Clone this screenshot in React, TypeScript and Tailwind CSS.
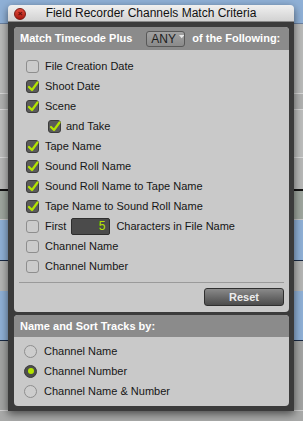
import React from "react";

const FONT = { fontFamily: '"Liberation Sans", Arial, sans-serif' };

const ROWS: { label: string; on: boolean; indent?: boolean; field?: boolean }[] = [
  { label: "File Creation Date", on: false },
  { label: "Shoot Date", on: true },
  { label: "Scene", on: true },
  { label: "and Take", on: true, indent: true },
  { label: "Tape Name", on: true },
  { label: "Sound Roll Name", on: true },
  { label: "Sound Roll Name to Tape Name", on: true },
  { label: "Tape Name to Sound Roll Name", on: true },
  { label: "First", on: false, field: true },
  { label: "Channel Name", on: false },
  { label: "Channel Number", on: false },
];

const SORT = [
  { label: "Channel Name", on: false },
  { label: "Channel Number", on: true },
  { label: "Channel Name & Number", on: false },
];

function Check({ on }: { on: boolean }) {
  if (!on) {
    return <div className="w-[13px] h-[13px] shrink-0 rounded-[3px] border border-[#8e8e8e] bg-[#cbcbcb]" />;
  }
  return (
    <div className="relative w-[13px] h-[13px] shrink-0 rounded-[3px] border border-[#3c3c3c] bg-[#5a5a5a]">
      <svg className="absolute left-[0px] top-[-1px]" width="12" height="13" viewBox="0 0 12 13">
        <path d="M2 7 L5 10 L10.5 2.5" fill="none" stroke="#b4e400" strokeWidth="2.2" strokeLinecap="round" strokeLinejoin="round" />
      </svg>
    </div>
  );
}

function Radio({ on }: { on: boolean }) {
  if (!on) {
    return <div className="w-[13px] h-[13px] shrink-0 rounded-full border border-[#8e8e8e] bg-[#cdcdcd]" />;
  }
  return (
    <div className="w-[13px] h-[13px] shrink-0 rounded-full bg-[#4e4e4e] border border-[#3a3a3a] flex items-center justify-center">
      <div className="w-[6px] h-[6px] rounded-full bg-[#b4e400]" />
    </div>
  );
}

export default function App() {
  return (
    <div className="relative w-[303px] h-[421px] overflow-hidden bg-[#a9aaa9]" style={FONT}>
      {/* Pro Tools edit window peeking out behind the dialog */}
      <div className="flex flex-col">
        <div className="h-[24px] bg-[#8fb0d6] border-b border-[#6a80a0]" />
        <div className="h-[70px] bg-[#b9bab9] border-b border-[#d8d8d8]" />
        <div className="h-[16px] bg-[#b0b1b0] border-b border-[#d8d8d8]" />
        <div className="h-[48px] bg-[#bcbdbc] border-b border-[#d8d8d8]" />
        <div className="h-[33px] bg-[#b7b8b7] border-b-2 border-[#111]" />
        <div className="h-[29px] bg-[#9ea69e] border-b border-[#c8c8c8]" />
        <div className="h-[41px] bg-[#8fb0d6] border-b border-[#1a2a44]" />
        <div className="h-[30px] bg-[#b4b5b4]" />
        <div className="h-[50px] bg-[#8fb0d6] border-b border-[#1a2a44]" />
        <div className="h-[70px] bg-[#a3a4a3] border-b border-[#d0d0d0]" />
      </div>

      {/* Dialog window */}
      <div className="absolute left-[8px] top-[5px] w-[286px] flex flex-col rounded-t-[4px] shadow-[0_3px_8px_rgba(0,0,0,0.55)]">
        <div className="relative h-[17px] flex items-center justify-center rounded-t-[4px] bg-gradient-to-b from-[#f0f0f0] to-[#d2d2d2] border-b border-[#8a8a8a]">
          <div className="absolute left-[6px] top-[3px] w-[12px] h-[12px] rounded-full bg-gradient-to-b from-[#e24a3c] to-[#a8140c] border border-[#7a1a12] flex items-center justify-center">
            <span className="text-[8px] leading-none text-[#5a0a04] font-bold">×</span>
          </div>
          <span className="text-[12px] text-[#111] leading-none">Field Recorder Channels Match Criteria</span>
        </div>

        <div className="bg-[#3b3b3b] pl-[6px] pr-[5px] pt-[5px] pb-[5px] flex flex-col gap-[3px]">
          {/* Match criteria panel */}
          <div className="rounded-[4px] overflow-hidden bg-[#c9c9c9]">
            <div className="h-[23px] bg-[#8b8b8b] flex items-center px-[6px] text-[11px] font-bold text-white">
              <span>Match Timecode Plus</span>
              <div className="ml-[14px] w-[39px] h-[16px] rounded-[3px] border border-[#585858] bg-gradient-to-b from-[#a2a2a2] to-[#8a8a8a] flex items-center pl-[4px] gap-[3px]">
                <span className="text-[12px] font-normal text-[#1c1c1c] leading-none">ANY</span>
                <svg width="8" height="6" viewBox="0 0 8 6" className="mt-[-4px]">
                  <path d="M0 0 H8 L4 5 Z" fill="#e8e8e8" />
                </svg>
              </div>
              <span className="ml-[7px]">of the Following:</span>
            </div>

            <div className="flex flex-col pt-[6px] px-[5px] pb-[6px]">
              {ROWS.map((r, i) => (
                <div key={i} className={`h-[20px] flex items-center text-[11px] text-[#161616] ${r.indent ? "pl-[29px] gap-[5px]" : "pl-[7px] gap-[6px]"}`}>
                  <Check on={r.on} />
                  <span>{r.label}</span>
                  {r.field && (
                    <>
                      <div className="ml-[-1px] w-[39px] h-[17px] rounded-[2px] bg-[#4b4b4b] border border-[#2e2e2e] flex items-center justify-end pr-[4px] text-[12px] text-[#b4e400]">
                        5
                      </div>
                      <span>Characters in File Name</span>
                    </>
                  )}
                </div>
              ))}
              <div className="mt-[6px] h-px bg-[#9a9a9a]" />
              <div className="flex justify-end pt-[5px]">
                <div className="w-[80px] h-[18px] rounded-[3px] border border-[#2f2f2f] bg-gradient-to-b from-[#8a8a8a] to-[#4c4c4c] flex items-center justify-center text-[11px] font-bold text-[#ececec]">
                  Reset
                </div>
              </div>
            </div>
          </div>

          {/* Sort panel */}
          <div className="rounded-[4px] overflow-hidden bg-[#c9c9c9]">
            <div className="h-[22px] bg-[#8b8b8b] flex items-center px-[6px] text-[11px] font-bold text-white">
              Name and Sort Tracks by:
            </div>
            <div className="flex flex-col pt-[4px] pb-[5px] pl-[10px]">
              {SORT.map((r, i) => (
                <div key={i} className="h-[20px] flex items-center gap-[7px] text-[11px] text-[#161616]">
                  <Radio on={r.on} />
                  <span>{r.label}</span>
                </div>
              ))}
            </div>
          </div>
        </div>
      </div>
    </div>
  );
}
